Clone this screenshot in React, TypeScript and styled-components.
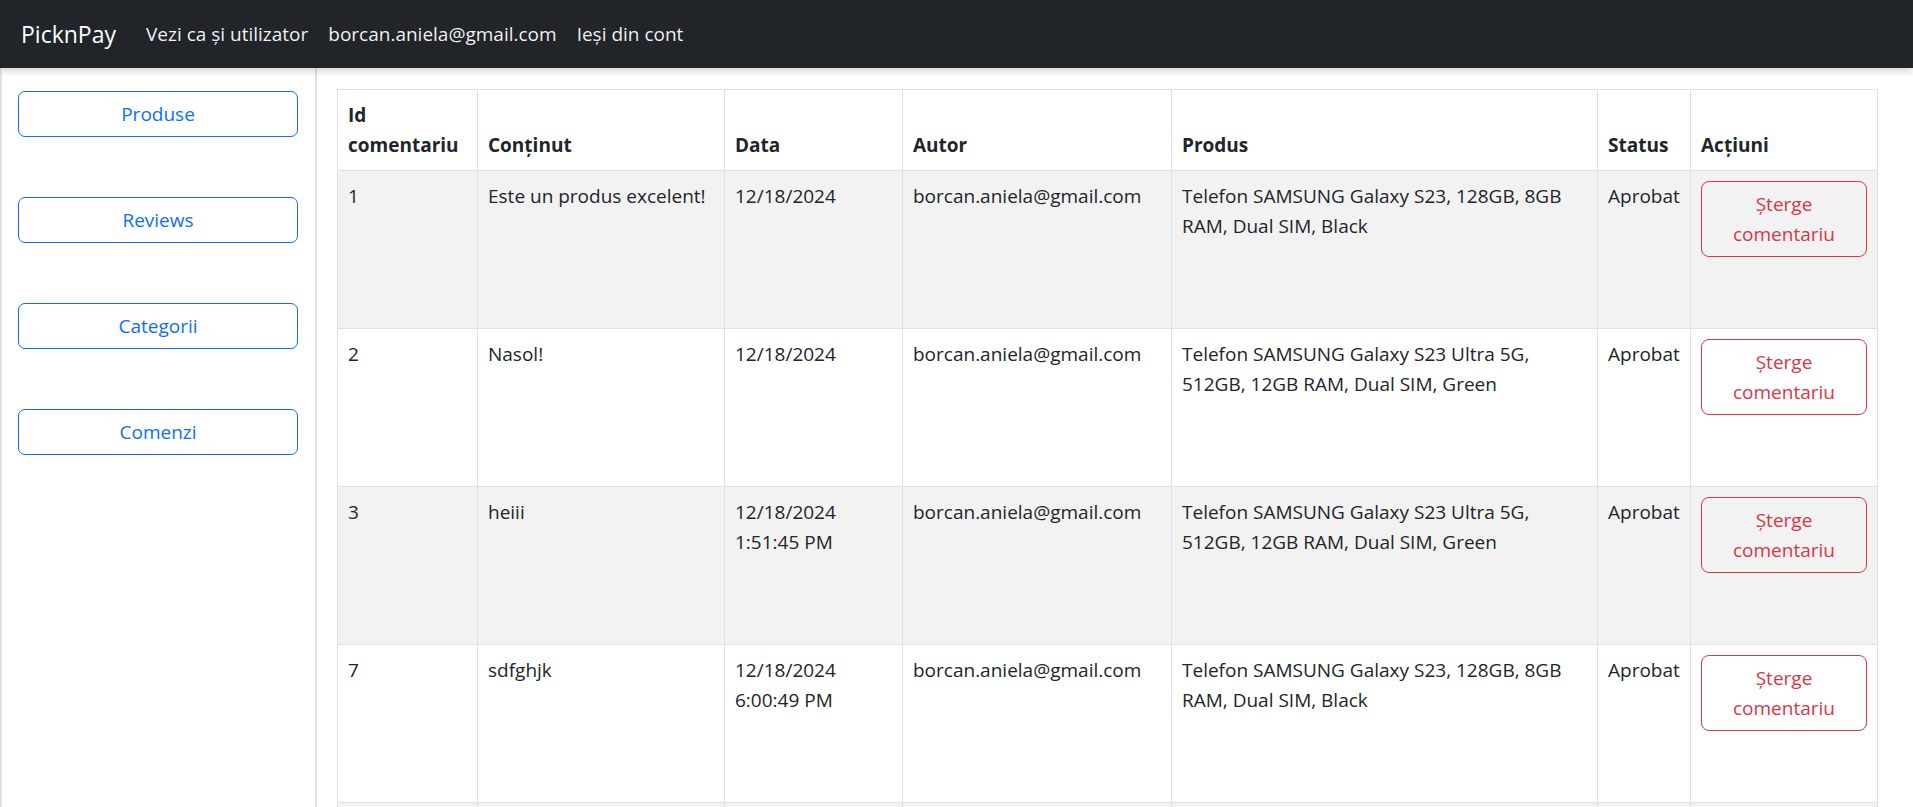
import React from "react";
import styled, { createGlobalStyle } from "styled-components";

const GlobalStyle = createGlobalStyle`
  html, body {
    margin: 0;
    padding: 0;
  }
  body {
    font-family: "Open Sans", "Noto Sans", "Liberation Sans", sans-serif;
    font-size: 19px;
    line-height: 30px;
    color: #212529;
    background: #ffffff;
  }
  * { box-sizing: border-box; }
`;

const Page = styled.div`
  display: flex;
  flex-direction: column;
  min-height: 100vh;
`;

const Navbar = styled.nav`
  height: 68px;
  background: #212529;
  display: flex;
  align-items: center;
  padding: 0 20px 0 21px;
  box-shadow: 0 3px 8px rgba(0, 0, 0, 0.18);
  position: relative;
  z-index: 2;
`;

const Brand = styled.a`
  color: #ffffff;
  font-size: 23px;
  line-height: 36px;
  margin-right: 20px;
  text-decoration: none;
`;

const NavLinks = styled.div`
  display: flex;
  align-items: center;
`;

const NavLink = styled.a`
  color: rgba(255, 255, 255, 0.95);
  padding: 0 10px;
  text-decoration: none;
  font-size: 19px;
  line-height: 30px;
`;

const Body = styled.div`
  display: flex;
  flex: 1;
  align-items: stretch;
`;

const Sidebar = styled.aside`
  width: 317px;
  flex-shrink: 0;
  border-left: 2px solid #dee2e6;
  border-right: 2px solid #dee2e6;
  padding: 23px 17px 20px 16px;
  display: flex;
  flex-direction: column;
  gap: 60px;
`;

const SideButton = styled.button`
  display: block;
  width: 100%;
  height: 46px;
  background: transparent;
  border: 1px solid #0d6efd;
  border-radius: 7px;
  color: #0d6efd;
  font-family: inherit;
  font-size: 19px;
  line-height: 30px;
  padding: 7px 15px;
  text-align: center;
  cursor: pointer;
`;

const Main = styled.main`
  flex: 1;
  padding: 21px 19px 20px 20px;
  min-width: 0;
`;

const Table = styled.table`
  width: 1540px;
  table-layout: fixed;
  border-collapse: collapse;
  border: 1px solid #dee2e6;
`;

const HeadCell = styled.th`
  border: 1px solid #dee2e6;
  padding: 10px;
  text-align: left;
  vertical-align: bottom;
  font-weight: 700;
  background: #ffffff;
`;

const Row = styled.tr<{ $striped: boolean }>`
  height: 158px;
  background: ${(p) => (p.$striped ? "#f2f2f2" : "#ffffff")};
`;

const Cell = styled.td`
  border: 1px solid #dee2e6;
  padding: 10px;
  vertical-align: top;
  text-align: left;
`;

const DeleteButton = styled.button`
  display: block;
  width: 100%;
  background: transparent;
  border: 1px solid #dc3545;
  border-radius: 8px;
  color: #dc3545;
  font-family: inherit;
  font-size: 19px;
  line-height: 30px;
  padding: 7px 15px;
  text-align: center;
  cursor: pointer;
`;

const columns: { label: string; width: number }[] = [
  { label: "Id comentariu", width: 140 },
  { label: "Conținut", width: 247 },
  { label: "Data", width: 178 },
  { label: "Autor", width: 269 },
  { label: "Produs", width: 426 },
  { label: "Status", width: 93 },
  { label: "Acțiuni", width: 187 },
];

const EMAIL = "borcan.aniela@gmail.com";
const S23 = "Telefon SAMSUNG Galaxy S23, 128GB, 8GB RAM, Dual SIM, Black";
const ULTRA = "Telefon SAMSUNG Galaxy S23 Ultra 5G, 512GB, 12GB RAM, Dual SIM, Green";

const rows = [
  { id: 1, text: "Este un produs excelent!", date: "12/18/2024", product: S23 },
  { id: 2, text: "Nasol!", date: "12/18/2024", product: ULTRA },
  { id: 3, text: "heiii", date: "12/18/2024 1:51:45 PM", product: ULTRA },
  { id: 7, text: "sdfghjk", date: "12/18/2024 6:00:49 PM", product: S23 },
  { id: 8, text: "Foarte bun!", date: "12/19/2024 10:12:03 AM", product: S23 },
  { id: 9, text: "Recomand", date: "12/19/2024 11:40:27 AM", product: ULTRA },
  { id: 10, text: "ok", date: "12/20/2024 3:05:11 PM", product: S23 },
  { id: 11, text: "test", date: "12/20/2024 4:22:58 PM", product: ULTRA },
];

const sideItems = ["Produse", "Reviews", "Categorii", "Comenzi"];

export default function App() {
  return (
    <>
      <GlobalStyle />
      <Page>
        <Navbar>
          <Brand href="#">PicknPay</Brand>
          <NavLinks>
            <NavLink href="#">Vezi ca și utilizator</NavLink>
            <NavLink href="#">{EMAIL}</NavLink>
            <NavLink href="#">Ieși din cont</NavLink>
          </NavLinks>
        </Navbar>
        <Body>
          <Sidebar>
            {sideItems.map((item) => (
              <SideButton key={item}>{item}</SideButton>
            ))}
          </Sidebar>
          <Main>
            <Table>
              <colgroup>
                {columns.map((c) => (
                  <col key={c.label} style={{ width: c.width }} />
                ))}
              </colgroup>
              <thead>
                <tr>
                  {columns.map((c) => (
                    <HeadCell key={c.label}>{c.label}</HeadCell>
                  ))}
                </tr>
              </thead>
              <tbody>
                {rows.map((r, i) => (
                  <Row key={r.id} $striped={i % 2 === 0}>
                    <Cell>{r.id}</Cell>
                    <Cell>{r.text}</Cell>
                    <Cell>{r.date}</Cell>
                    <Cell>{EMAIL}</Cell>
                    <Cell>{r.product}</Cell>
                    <Cell>Aprobat</Cell>
                    <Cell>
                      <DeleteButton>Șterge comentariu</DeleteButton>
                    </Cell>
                  </Row>
                ))}
              </tbody>
            </Table>
          </Main>
        </Body>
      </Page>
    </>
  );
}
